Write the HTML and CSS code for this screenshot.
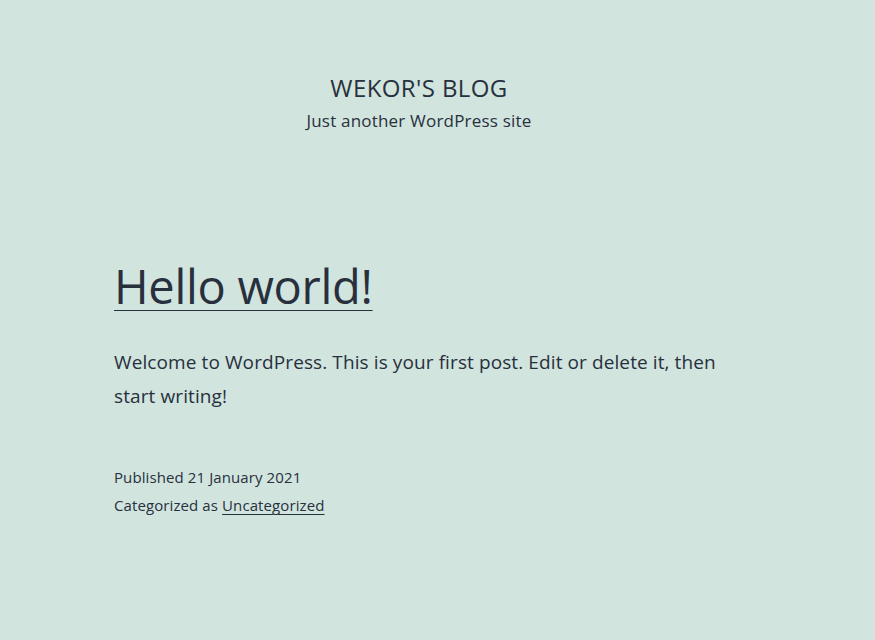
FILE: index.html
```html
<!DOCTYPE html>
<html lang="en">
<head>
<meta charset="utf-8">
<title>Wekor's Blog</title>
<link rel="stylesheet" href="styles.css">
</head>
<body>
<div class="page">
  <header class="site-header">
    <p class="site-title">WEKOR'S BLOG</p>
    <p class="site-description">Just another WordPress site</p>
  </header>
  <main class="site-main">
    <article class="post">
      <h2 class="entry-title"><a href="#">Hello world!</a></h2>
      <div class="entry-content">
        <p>Welcome to WordPress. This is your first post. Edit or delete it, then start writing!</p>
      </div>
      <footer class="entry-footer">
        <p class="meta">Published 21 January 2021</p>
        <p class="meta">Categorized as <a href="#">Uncategorized</a></p>
      </footer>
    </article>
  </main>
</div>
</body>
</html>
```
FILE: styles.css
```css
html, body {
  margin: 0;
  padding: 0;
}
body {
  background: #d1e4dd;
  color: #28303d;
  font-family: "Open Sans", sans-serif;
  height: 640px;
  overflow: hidden;
}
.page {
  width: 610px;
  margin-left: 114px;
}
.site-header {
  padding-top: 73px;
  text-align: center;
}
.site-title {
  margin: 0;
  font-size: 24px;
  line-height: 30px;
  letter-spacing: 0.4px;
}
.site-description {
  margin: 5px 0 0;
  font-size: 17px;
  line-height: 26px;
  letter-spacing: 0.2px;
}
.site-main {
  padding-top: 121px;
}
.entry-title {
  margin: 0;
  font-weight: 400;
  font-size: 47px;
  line-height: 62px;
  letter-spacing: -0.3px;
}
.entry-title a,
.meta a {
  color: inherit;
  text-decoration: underline;
  text-decoration-thickness: 1px;
  text-underline-offset: 6px;
}
.entry-content {
  margin-top: 28px;
}
.entry-content p {
  margin: 0;
  font-size: 19px;
  line-height: 34px;
  letter-spacing: 0.1px;
}
.entry-footer {
  margin-top: 50px;
}
.meta {
  margin: 0;
  font-size: 15px;
  line-height: 28px;
  letter-spacing: 0.1px;
}
.meta a {
  text-underline-offset: 3px;
}
```
